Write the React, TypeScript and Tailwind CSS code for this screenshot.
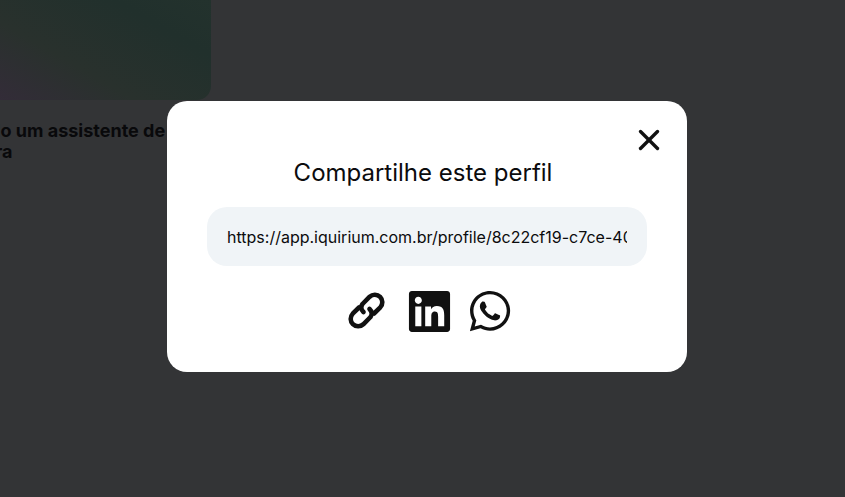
import { FaLinkedin, FaWhatsapp } from 'react-icons/fa';
import { X } from 'lucide-react';

const PROFILE_URL = 'https://app.iquirium.com.br/profile/8c22cf19-c7ce-4062-9d1e-3b7a5f20c1ab';

export default function App() {
  return (
    <div className="relative h-[497px] w-[845px] overflow-hidden bg-[#333436] font-['Inter',sans-serif]">
      {/* Page behind the overlay */}
      <div className="w-[211px]">
        <div className="h-[100px] rounded-br-[14px] bg-[linear-gradient(30deg,#332c38_0%,#29312d_35%,#21302c_75%,#23322d_100%)]" />
        <p className="mt-[20px] -ml-[22px] w-[240px] whitespace-nowrap text-[18px] leading-[21px] font-bold text-[#09090b]">
          ndo um assistente de
          <br />
          <span className="ml-[14px] pl-[3px]">ra</span>
        </p>
      </div>

      {/* Share modal */}
      <div className="absolute inset-0 flex items-start pt-[101px] pl-[167px]">
        <div className="relative flex h-[271px] w-[520px] flex-col items-center rounded-[20px] bg-white">
          <button className="absolute top-[22px] right-[21px] text-[#111111]">
            <X size={34} strokeWidth={2.4} />
          </button>
          <h2 className="mt-[57px] -ml-[8px] text-[24px] leading-[29px] font-normal text-[#0b0b0d]">Compartilhe este perfil</h2>
          <input
            readOnly
            value={PROFILE_URL}
            className="mt-[20px] h-[59px] w-[440px] rounded-[20px] bg-[#f0f4f7] px-[20px] text-[16px] text-[#0b0b0d] outline-none"
          />
          <div className="mt-[20px] ml-px flex items-center gap-[14px] text-[#111111]">
            <svg width="50" height="50" viewBox="0 0 50 50" fill="none" stroke="currentColor" strokeWidth="4.6" strokeLinecap="round" strokeLinejoin="round">
              <path d="M21.5 26 Q17.5 22 20.5 18 L27.7 10.7 A7.5 7.5 0 0 1 38.3 21.3 L32 27.5" />
              <path d="M27.5 23 Q31.5 27 28.5 31 L21.3 38.3 A7.5 7.5 0 0 1 10.7 27.7 L17 21.5" />
            </svg>
            <FaLinkedin size={47} />
            <FaWhatsapp size={46} />
          </div>
        </div>
      </div>
    </div>
  );
}
